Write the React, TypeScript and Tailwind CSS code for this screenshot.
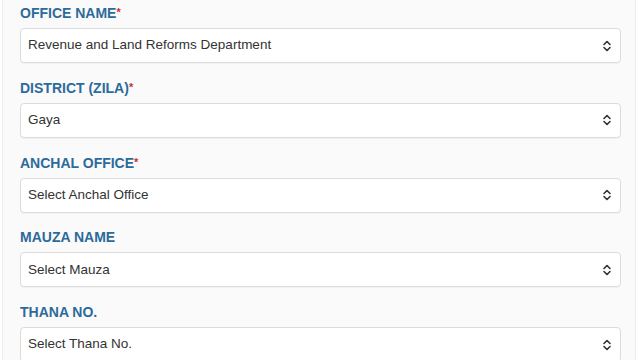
import React from "react";

const fields = [
  { label: "OFFICE NAME", required: true, value: "Revenue and Land Reforms Department" },
  { label: "DISTRICT (ZILA)", required: true, value: "Gaya" },
  { label: "ANCHAL OFFICE", required: true, value: "Select Anchal Office" },
  { label: "MAUZA NAME", required: false, value: "Select Mauza" },
  { label: "THANA NO.", required: false, value: "Select Thana No." },
];

function UpDown() {
  return (
    <svg width="10" height="12" viewBox="0 0 10 12" fill="none" stroke="#333" strokeWidth="1.6" strokeLinecap="round" strokeLinejoin="round">
      <path d="M2 4.5 L5 1.5 L8 4.5" />
      <path d="M2 7.5 L5 10.5 L8 7.5" />
    </svg>
  );
}

export default function App() {
  return (
    <div className="w-[640px] h-[360px] overflow-hidden bg-white" style={{ fontFamily: '"Liberation Sans", Arial, sans-serif' }}>
      <div className="mx-[2px] w-[634px] h-full border-x border-[#ececec] bg-[#fafafa] pl-[17px] pr-[14px] pt-[3px]">
        {fields.map((f) => (
          <div key={f.label} className="mb-[14.75px]">
            <div className="h-5 leading-5 text-[14px] font-bold text-[#2c6a9a] mb-[5px]">
              {f.label}
              {f.required && <span className="text-[#c9302c] text-[11px] align-top relative top-[-1px]">*</span>}
            </div>
            <div className="h-[35px] flex items-center justify-between rounded-[4px] border border-[#dcdcdc] bg-white pl-[7px] pr-[8px] shadow-[0_1px_1px_rgba(0,0,0,0.04)]">
              <span className="text-[13.5px] text-[#333]">{f.value}</span>
              <UpDown />
            </div>
          </div>
        ))}
      </div>
    </div>
  );
}
